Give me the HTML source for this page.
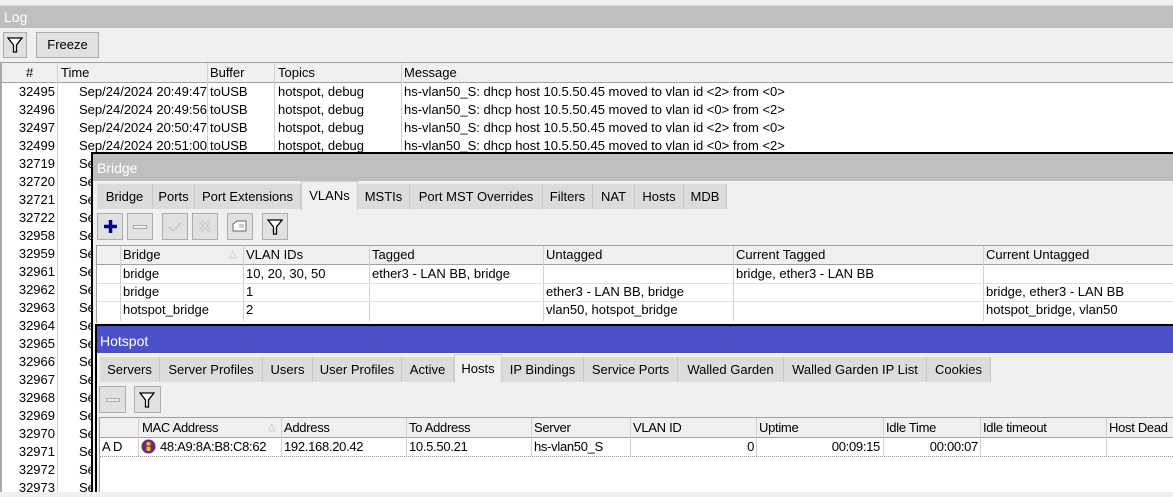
<!DOCTYPE html>
<html><head><style>
*{box-sizing:border-box;margin:0;padding:0}
body{width:1173px;height:492px;overflow:hidden;background:#f0f0f0;font-family:"Liberation Sans",Arial,sans-serif;font-size:13px;color:#000;position:relative}
.a{position:absolute;white-space:nowrap}
.t{position:absolute;white-space:nowrap;line-height:18px}
.btn{position:absolute;border:1px solid #adadad;background:#e1e1e1}
.tab{position:absolute;background:#dcdcdc;border-right:1px solid #c8c8c8;text-align:center;line-height:25px}
.vl{position:absolute;width:1px;background:#d0d0d0}
.hl{position:absolute;height:1px;background:#e0e0e0}
.r{text-align:right}
</style></head><body>
<!-- top strip -->
<div class="a" style="left:0;top:0;width:1173px;height:6px;background:#f0f0f0;border-bottom:1px solid #ddd"></div>
<!-- Log title -->
<div class="a" style="left:0;top:6px;width:1173px;height:22px;background:#bfbfbf;color:#fff;font-size:14px;line-height:22px;padding-left:4px">Log</div>
<!-- log toolbar -->
<div class="btn" style="left:3px;top:32px;width:24px;height:26px"></div>
<svg class="a" style="left:7px;top:36px" width="16" height="18" viewBox="0 0 16 18"><path d="M1 2 H15 L9.5 9 V16 H6.5 V9 Z" fill="#fff" stroke="#000" stroke-width="1.3"/></svg>
<div class="btn" style="left:36px;top:32px;width:63px;height:26px;text-align:center;line-height:24px">Freeze</div>
<!-- log table -->
<div class="a" style="left:0;top:62px;width:1173px;height:430px;background:#fff;border-left:2px solid #a8a8a8"></div>
<div class="a" style="left:2px;top:62px;width:1171px;height:21px;background:#f0f0f0;border-top:1px solid #a0a0a0;border-bottom:1px solid #a0a0a0"></div>
<div class="vl" style="left:57px;top:63px;height:429px"></div>
<div class="vl" style="left:207px;top:63px;height:90px"></div>
<div class="vl" style="left:274px;top:63px;height:90px"></div>
<div class="vl" style="left:401px;top:63px;height:90px"></div>
<div class="t" style="left:26px;top:64px">#</div>
<div class="t" style="left:61px;top:64px">Time</div>
<div class="t" style="left:210px;top:64px">Buffer</div>
<div class="t" style="left:278px;top:64px">Topics</div>
<div class="t" style="left:404px;top:64px">Message</div>
<div id="logrows"></div>
<div class="t r" style="left:0;width:55px;top:83px;line-height:18px">32495<br>32496<br>32497<br>32499<br>32719<br>32720<br>32721<br>32722<br>32958<br>32959<br>32961<br>32962<br>32963<br>32964<br>32965<br>32966<br>32967<br>32968<br>32969<br>32970<br>32971<br>32972<br>32973</div>
<div class="t" style="left:79px;top:83px;line-height:18px">Sep/24/2024 20:49:47<br>Sep/24/2024 20:49:56<br>Sep/24/2024 20:50:47<br>Sep/24/2024 20:51:00<br>Se<br>Se<br>Se<br>Se<br>Se<br>Se<br>Se<br>Se<br>Se<br>Se<br>Se<br>Se<br>Se<br>Se<br>Se<br>Se<br>Se<br>Se<br>Se</div>
<div class="t" style="left:210px;top:83px;line-height:18px">toUSB<br>toUSB<br>toUSB<br>toUSB</div>
<div class="t" style="left:278px;top:83px;line-height:18px">hotspot, debug<br>hotspot, debug<br>hotspot, debug<br>hotspot, debug</div>
<div class="t" style="left:404px;top:83px;line-height:18px">hs-vlan50_S: dhcp host 10.5.50.45 moved to vlan id &lt;2&gt; from &lt;0&gt;<br>hs-vlan50_S: dhcp host 10.5.50.45 moved to vlan id &lt;0&gt; from &lt;2&gt;<br>hs-vlan50_S: dhcp host 10.5.50.45 moved to vlan id &lt;2&gt; from &lt;0&gt;<br>hs-vlan50_S: dhcp host 10.5.50.45 moved to vlan id &lt;0&gt; from &lt;2&gt;</div>

<!-- Bridge window -->
<div class="a" style="left:91px;top:152px;width:1082px;height:340px;background:#f0f0f0;border-left:2px solid #000;border-top:2px solid #000"></div>
<div class="a" style="left:93px;top:154px;width:1080px;height:27px;background:#bfbfbf;color:#fff;font-size:14px;line-height:28px;padding-left:4px">Bridge</div>
<div class="tab" style="left:97px;top:184px;width:56px">Bridge</div>
<div class="tab" style="left:153px;top:184px;width:42px">Ports</div>
<div class="tab" style="left:195px;top:184px;width:106px">Port Extensions</div>
<div class="tab" style="left:301px;top:181px;width:57px;height:29px;background:#f0f0f0;border:1px solid #d0d0d0;border-bottom:none;line-height:28px">VLANs</div>
<div class="tab" style="left:358px;top:184px;width:52px">MSTIs</div>
<div class="tab" style="left:410px;top:184px;width:133px">Port MST Overrides</div>
<div class="tab" style="left:543px;top:184px;width:50px">Filters</div>
<div class="tab" style="left:593px;top:184px;width:42px">NAT</div>
<div class="tab" style="left:635px;top:184px;width:49px">Hosts</div>
<div class="tab" style="left:684px;top:184px;width:43px">MDB</div>
<!-- bridge toolbar -->
<div class="btn" style="left:97px;top:213px;width:26px;height:27px"></div>
<svg class="a" style="left:102px;top:218px" width="17" height="17"><path d="M8.5 2v13M2 8.5h13" stroke="#00008b" stroke-width="3.5"/></svg>
<div class="btn" style="left:127px;top:213px;width:26px;height:27px"></div>
<div class="a" style="left:133px;top:225px;width:14px;height:4px;border:1px solid #aaa;background:#eee"></div>
<div class="btn" style="left:162px;top:213px;width:26px;height:27px"></div>
<svg class="a" style="left:166px;top:218px" width="18" height="17"><path d="M3 9l4 4 8-8" fill="none" stroke="#bbb" stroke-width="1.5" stroke-dasharray="2 1"/></svg>
<div class="btn" style="left:192px;top:213px;width:26px;height:27px"></div>
<svg class="a" style="left:197px;top:218px" width="16" height="17"><path d="M3 3l10 10M13 3L3 13" stroke="#bbb" stroke-width="3"/><path d="M3 3l10 10M13 3L3 13" stroke="#eee" stroke-width="1.2"/></svg>
<div class="btn" style="left:227px;top:213px;width:26px;height:27px"></div>
<svg class="a" style="left:232px;top:219px" width="16" height="15"><path d="M1 5l4-3h9v10H1z" fill="#fff" stroke="#666"/><path d="M7 6h5M7 8h5" stroke="#999"/></svg>
<div class="btn" style="left:262px;top:213px;width:26px;height:27px"></div>
<svg class="a" style="left:267px;top:218px" width="16" height="18" viewBox="0 0 16 18"><path d="M1 2 H15 L9.5 9 V16 H6.5 V9 Z" fill="#fff" stroke="#000" stroke-width="1.3"/></svg>
<!-- bridge table -->
<div class="a" style="left:96px;top:245px;width:1077px;height:78px;background:#fff;border-left:1px solid #a0a0a0"></div>
<div class="a" style="left:97px;top:245px;width:1076px;height:20px;background:#f0f0f0;border-top:1px solid #a0a0a0;border-bottom:1px solid #a0a0a0"></div>
<div class="vl" style="left:120px;top:246px;height:75px"></div>
<div class="vl" style="left:243px;top:246px;height:75px"></div>
<div class="vl" style="left:369px;top:246px;height:75px"></div>
<div class="vl" style="left:543px;top:246px;height:75px"></div>
<div class="vl" style="left:733px;top:246px;height:75px"></div>
<div class="vl" style="left:983px;top:246px;height:75px"></div>
<div class="hl" style="left:97px;top:283px;width:1076px"></div>
<div class="hl" style="left:97px;top:301px;width:1076px"></div>
<div class="t" style="left:123px;top:246px">Bridge</div>
<div class="t" style="left:229px;top:246px;color:#bbb;font-size:10px">△</div>
<div class="t" style="left:246px;top:246px">VLAN IDs</div>
<div class="t" style="left:372px;top:246px">Tagged</div>
<div class="t" style="left:546px;top:246px">Untagged</div>
<div class="t" style="left:736px;top:246px">Current Tagged</div>
<div class="t" style="left:986px;top:246px">Current Untagged</div>
<div class="t" style="left:123px;top:265px">bridge<br>bridge<br>hotspot_bridge</div>
<div class="t" style="left:246px;top:265px">10, 20, 30, 50<br>1<br>2</div>
<div class="t" style="left:372px;top:265px">ether3 - LAN BB, bridge</div>
<div class="t" style="left:546px;top:283px">ether3 - LAN BB, bridge<br>vlan50, hotspot_bridge</div>
<div class="t" style="left:736px;top:265px">bridge, ether3 - LAN BB</div>
<div class="t" style="left:986px;top:283px">bridge, ether3 - LAN BB<br>hotspot_bridge, vlan50</div>

<!-- Hotspot window -->
<div class="a" style="left:95px;top:324px;width:1078px;height:168px;background:#f0f0f0;border-left:2px solid #000;border-top:2px solid #000"></div>
<div class="a" style="left:97px;top:326px;width:1076px;height:27px;background:#4c50c8;color:#fff;font-size:14px;line-height:30px;padding-left:3px">Hotspot</div>
<div class="tab" style="left:100px;top:357px;width:60px">Servers</div>
<div class="tab" style="left:160px;top:357px;width:103px">Server Profiles</div>
<div class="tab" style="left:263px;top:357px;width:50px">Users</div>
<div class="tab" style="left:313px;top:357px;width:89px">User Profiles</div>
<div class="tab" style="left:402px;top:357px;width:52px">Active</div>
<div class="tab" style="left:454px;top:354px;width:48px;height:29px;background:#f0f0f0;border:1px solid #d0d0d0;border-bottom:none;line-height:28px">Hosts</div>
<div class="tab" style="left:502px;top:357px;width:82px">IP Bindings</div>
<div class="tab" style="left:584px;top:357px;width:94px">Service Ports</div>
<div class="tab" style="left:678px;top:357px;width:106px">Walled Garden</div>
<div class="tab" style="left:784px;top:357px;width:143px">Walled Garden IP List</div>
<div class="tab" style="left:927px;top:357px;width:64px">Cookies</div>
<div class="btn" style="left:99px;top:386px;width:27px;height:27px"></div>
<div class="a" style="left:106px;top:398px;width:14px;height:4px;border:1px solid #aaa;background:#eee"></div>
<div class="btn" style="left:134px;top:386px;width:27px;height:27px"></div>
<svg class="a" style="left:139px;top:391px" width="16" height="18" viewBox="0 0 16 18"><path d="M1 2 H15 L9.5 9 V16 H6.5 V9 Z" fill="#fff" stroke="#000" stroke-width="1.3"/></svg>
<!-- hotspot table -->
<div class="a" style="left:99px;top:417px;width:1074px;height:75px;background:#fff;border-left:1px solid #a0a0a0"></div>
<div class="a" style="left:100px;top:417px;width:1073px;height:21px;background:#f0f0f0;border-top:1px solid #a0a0a0;border-bottom:1px solid #a0a0a0"></div>
<div class="a" style="left:100px;top:456px;width:1073px;height:1px;border-top:1px dotted #999"></div>
<div class="vl" style="left:138px;top:418px;height:38px"></div>
<div class="vl" style="left:281px;top:418px;height:38px"></div>
<div class="vl" style="left:406px;top:418px;height:38px"></div>
<div class="vl" style="left:531px;top:418px;height:38px"></div>
<div class="vl" style="left:630px;top:418px;height:38px"></div>
<div class="vl" style="left:756px;top:418px;height:38px"></div>
<div class="vl" style="left:883px;top:418px;height:38px"></div>
<div class="vl" style="left:980px;top:418px;height:38px"></div>
<div class="vl" style="left:1106px;top:418px;height:38px"></div>
<div style="letter-spacing:-0.3px">
<div class="t" style="left:142px;top:419px">MAC Address</div>
<div class="t" style="left:268px;top:419px;color:#bbb;font-size:10px">△</div>
<div class="t" style="left:284px;top:419px">Address</div>
<div class="t" style="left:409px;top:419px">To Address</div>
<div class="t" style="left:534px;top:419px">Server</div>
<div class="t" style="left:633px;top:419px">VLAN ID</div>
<div class="t" style="left:759px;top:419px">Uptime</div>
<div class="t" style="left:886px;top:419px">Idle Time</div>
<div class="t" style="left:983px;top:419px">Idle timeout</div>
<div class="t" style="left:1109px;top:419px">Host Dead</div>
<div class="t" style="left:102px;top:438px">A D</div>
<svg class="a" style="left:141px;top:439px" width="15" height="15"><circle cx="7.5" cy="7.5" r="7" fill="#6b2a80"/><rect x="5.5" y="3" width="4" height="9" rx="1" fill="#e8c800"/><rect x="5.5" y="6.5" width="4" height="1.2" fill="#6b2a80"/></svg>
<div class="t" style="left:160px;top:438px">48:A9:8A:B8:C8:62</div>
<div class="t" style="left:284px;top:438px">192.168.20.42</div>
<div class="t" style="left:409px;top:438px">10.5.50.21</div>
<div class="t" style="left:534px;top:438px">hs-vlan50_S</div>
<div class="t r" style="left:630px;width:124px;top:438px">0</div>
<div class="t r" style="left:756px;width:124px;top:438px">00:09:15</div>
<div class="t r" style="left:883px;width:95px;top:438px">00:00:07</div>
</div>
</body></html>
